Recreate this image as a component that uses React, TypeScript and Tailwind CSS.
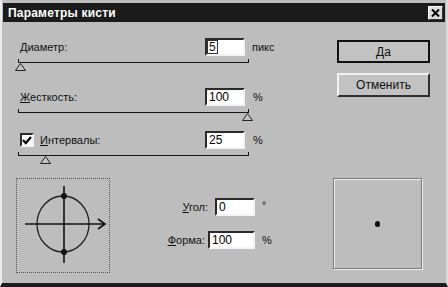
const Field = ({ value, w = 40 }: { value: string; w?: number }) => (
  <div
    className="h-[18px] bg-white border-2 border-t-[#2a2a2a] border-l-[#2a2a2a] border-b-[#f4f4f4] border-r-[#f4f4f4] flex items-center pl-[2px] text-[12px] text-black"
    style={{ width: w }}
  >
    {value}
  </div>
);

const Slider = ({ pos }: { pos: number }) => (
  <div className="relative h-[16px] w-[231px] pt-[3px]">
    <div className="h-[4px] border-x border-b border-[#151515]" />
    <svg className="absolute top-[7px]" style={{ left: pos }} width="11" height="8" viewBox="0 0 11 8">
      <path d="M5.5 0.5 L10.5 7.5 L0.5 7.5 Z" fill="#c4c4c4" stroke="#222" strokeWidth="1" />
    </svg>
  </div>
);

const Acc = ({ c }: { c: string }) => <span className="underline underline-offset-1">{c}</span>;

const App = () => {
  return (
    <div
      className="w-[448px] h-[287px] bg-[#bdbdbd] border-l-2 border-r-2 border-l-[#ececec] border-r-[#d8d8d8] border-b-4 border-b-[#1c1c1c] text-[#111] text-[11px] overflow-hidden"
      style={{ fontFamily: '"Liberation Sans", Arial, sans-serif' }}
    >
      {/* title bar */}
      <div className="mt-[3px] ml-[1px] mr-[1px] h-[19px] bg-[#1b1b1b] flex items-center justify-between pl-[5px] pr-[2px]">
        <span className="text-white font-bold text-[12px] tracking-[0.2px]">Параметры кисти</span>
        <div className="w-[15px] h-[14px] bg-[#dcdcdc] border border-t-white border-l-white border-b-[#333] border-r-[#333] flex items-center justify-center">
          <svg width="9" height="8" viewBox="0 0 9 8">
            <path d="M1 0.5 L8 7.5 M8 0.5 L1 7.5" stroke="#000" strokeWidth="2" />
          </svg>
        </div>
      </div>

      <div className="flex">
        {/* left column */}
        <div className="w-[331px] pl-[16px] pt-[16px]">
          <div className="flex items-center h-[18px] pl-[2px]">
            <span className="w-[185px]">
              <Acc c="Д" />иаметр:
            </span>
            <div className="h-[18px] w-[40px] bg-white border-2 border-t-[#2a2a2a] border-l-[#2a2a2a] border-b-[#f4f4f4] border-r-[#f4f4f4] flex items-center pl-[1px] text-[12px]">
              <span className="outline outline-1 outline-[#333] px-[1px] leading-[12px]">5</span>
            </div>
            <span className="ml-[7px]">пикс</span>
          </div>
          <Slider pos={-3} />

          <div className="flex items-center h-[18px] pl-[2px] mt-[16px]">
            <span className="w-[185px]">
              <Acc c="Ж" />есткость:
            </span>
            <Field value="100" />
            <span className="ml-[8px]">%</span>
          </div>
          <Slider pos={224} />

          <div className="flex items-center h-[18px] pl-[2px] mt-[9px]">
            <div className="w-[185px] flex items-center">
              <div className="w-[14px] h-[14px] bg-white border-2 border-t-[#2a2a2a] border-l-[#2a2a2a] border-b-[#f4f4f4] border-r-[#f4f4f4] flex items-center justify-center">
                <svg width="10" height="9" viewBox="0 0 10 9">
                  <path d="M1 4 L3.8 7 L9 1" stroke="#000" strokeWidth="2.2" fill="none" />
                </svg>
              </div>
              <span className="ml-[6px]">
                <Acc c="И" />нтервалы:
              </span>
            </div>
            <Field value="25" />
            <span className="ml-[8px]">%</span>
          </div>
          <Slider pos={22} />

          <div className="flex mt-[13px] ml-[-2px]">
            <div className="w-[94px] h-[95px] border border-dotted border-[#555]">
              <svg width="92" height="93" viewBox="0 0 92 93">
                <ellipse cx="46" cy="45" rx="26" ry="28" fill="none" stroke="#222" strokeWidth="1.3" />
                <path d="M47 7 L47 84" stroke="#111" strokeWidth="1.6" />
                <path d="M8 45 L87 45 M81 40 L88 45 L81 50" stroke="#111" strokeWidth="1.6" fill="none" />
                <circle cx="47" cy="17" r="3" fill="#111" />
                <circle cx="47" cy="73" r="3" fill="#111" />
              </svg>
            </div>
            <div className="w-[167px] pt-[20px] flex flex-col items-end gap-[15px]">
              <div className="flex items-center">
                <span className="mr-[7px]">
                  <Acc c="У" />гол:
                </span>
                <Field value="0" w={40} />
                <span className="w-[15px] ml-[7px] self-start pt-[4px] text-[10px] leading-[8px]">°</span>
              </div>
              <div className="flex items-center">
                <span className="mr-[3px]">
                  <Acc c="Ф" />орма:
                </span>
                <Field value="100" w={47} />
                <span className="w-[15px] ml-[7px]">%</span>
              </div>
            </div>
          </div>
        </div>

        {/* right column */}
        <div className="pt-[18px] flex flex-col">
          <div className="ml-[4px] w-[93px] h-[23px] border-2 border-[#111] bg-[#c2c2c2] flex items-center justify-center">
            <span className="text-[12px]">Да</span>
          </div>
          <div className="ml-[4px] mt-[10px] w-[93px] h-[24px] bg-[#c2c2c2] border-2 border-t-[#f2f2f2] border-l-[#f2f2f2] border-b-[#303030] border-r-[#303030] flex items-center justify-center">
            <span className="text-[12px]">Отменить</span>
          </div>
          <div className="mt-[81px] w-[89px] h-[91px] border border-[#7a7a7a] shadow-[inset_1px_1px_0_#f0f0f0,1px_1px_0_#f0f0f0] flex items-center justify-center">
            <div className="w-[5px] h-[6px] rounded-full bg-[#111]" />
          </div>
        </div>
      </div>
    </div>
  );
};

export default App;
